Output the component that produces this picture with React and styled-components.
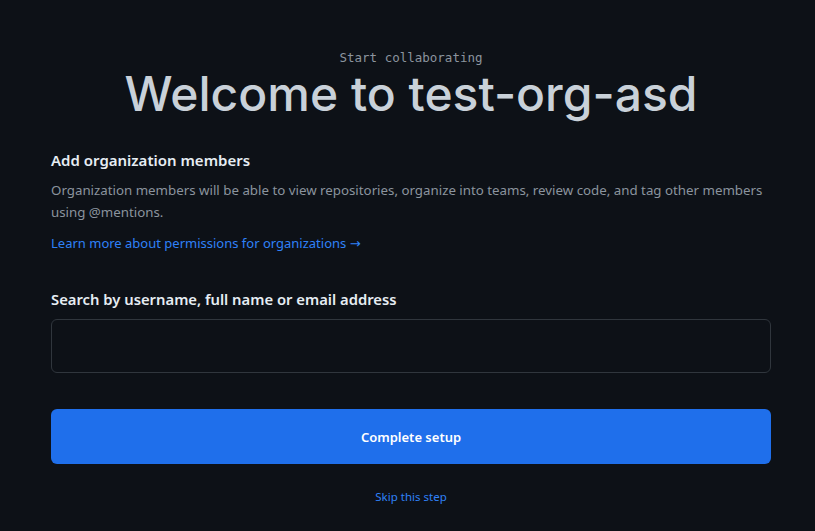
import React from "react";
import styled, { createGlobalStyle } from "styled-components";

const GlobalStyle = createGlobalStyle`
  html, body {
    margin: 0;
    padding: 0;
    background: #0d1117;
  }
  body {
    font-family: "Noto Sans", "Open Sans", sans-serif;
    color: #c9d1d9;
  }
`;

const Page = styled.div`
  width: 815px;
  height: 531px;
  overflow: hidden;
  background: #0d1117;
  padding: 0 44px 0 51px;
  box-sizing: border-box;
`;

const Hero = styled.header`
  display: flex;
  flex-direction: column;
  align-items: center;
  padding-top: 50px;
`;

const Eyebrow = styled.div`
  font-family: "DejaVu Sans Mono", "Liberation Mono", monospace;
  font-size: 12.5px;
  line-height: 16px;
  color: #8b949e;
`;

const Title = styled.h1`
  margin: 0;
  font-family: Inter, "Noto Sans", sans-serif;
  font-weight: 500;
  font-size: 48px;
  line-height: 56px;
  color: #c9d1d9;
`;

const Section = styled.section`
  margin-top: 27px;
`;

const Heading = styled.h2`
  margin: 0;
  font-size: 15px;
  line-height: 22px;
  font-weight: 600;
  color: #e6edf3;
`;

const Text = styled.p`
  margin: 8px 0 0;
  font-size: 13.3px;
  line-height: 22px;
  color: #8b949e;
`;

const Link = styled.a`
  display: inline-block;
  color: #2f81f7;
  text-decoration: none;
  font-size: ${(p) => (p.small ? "11.5px" : "13px")};
  line-height: 20px;
`;

const Arrow = styled.span`
  font-family: "DejaVu Sans", sans-serif;
  font-size: 13px;
`;

const LinkRow = styled.div`
  margin-top: 8px;
`;

const Field = styled.div`
  margin-top: 34px;
  display: flex;
  flex-direction: column;
  gap: 9px;
`;

const Label = styled.label`
  font-size: 14.8px;
  line-height: 22px;
  font-weight: 600;
  color: #e6edf3;
`;

const Input = styled.input`
  height: 54px;
  box-sizing: border-box;
  background: #0d1117;
  border: 1px solid #30363d;
  border-radius: 6px;
  padding: 0 12px;
  color: #c9d1d9;
  font-size: 14px;
  outline: none;
`;

const Button = styled.button`
  margin-top: 36px;
  width: 100%;
  height: 55px;
  border: 0;
  border-radius: 6px;
  background: #1f6feb;
  color: #ffffff;
  font-family: "Noto Sans", sans-serif;
  font-size: 13px;
  font-weight: 600;
`;

const Footer = styled.div`
  display: flex;
  justify-content: center;
  margin-top: 23px;
`;

export default function App() {
  return (
    <>
      <GlobalStyle />
      <Page>
        <Hero>
          <Eyebrow>Start collaborating</Eyebrow>
          <Title>Welcome to test-org-asd</Title>
        </Hero>

        <Section>
          <Heading>Add organization members</Heading>
          <Text>
            Organization members will be able to view repositories, organize
            into teams, review code, and tag other members using @mentions.
          </Text>
          <LinkRow>
            <Link href="#">
              Learn more about permissions for organizations <Arrow>→</Arrow>
            </Link>
          </LinkRow>
        </Section>

        <Field>
          <Label htmlFor="search">Search by username, full name or email address</Label>
          <Input id="search" type="text" />
        </Field>

        <Button>Complete setup</Button>

        <Footer>
          <Link href="#" small>
            Skip this step
          </Link>
        </Footer>
      </Page>
    </>
  );
}
